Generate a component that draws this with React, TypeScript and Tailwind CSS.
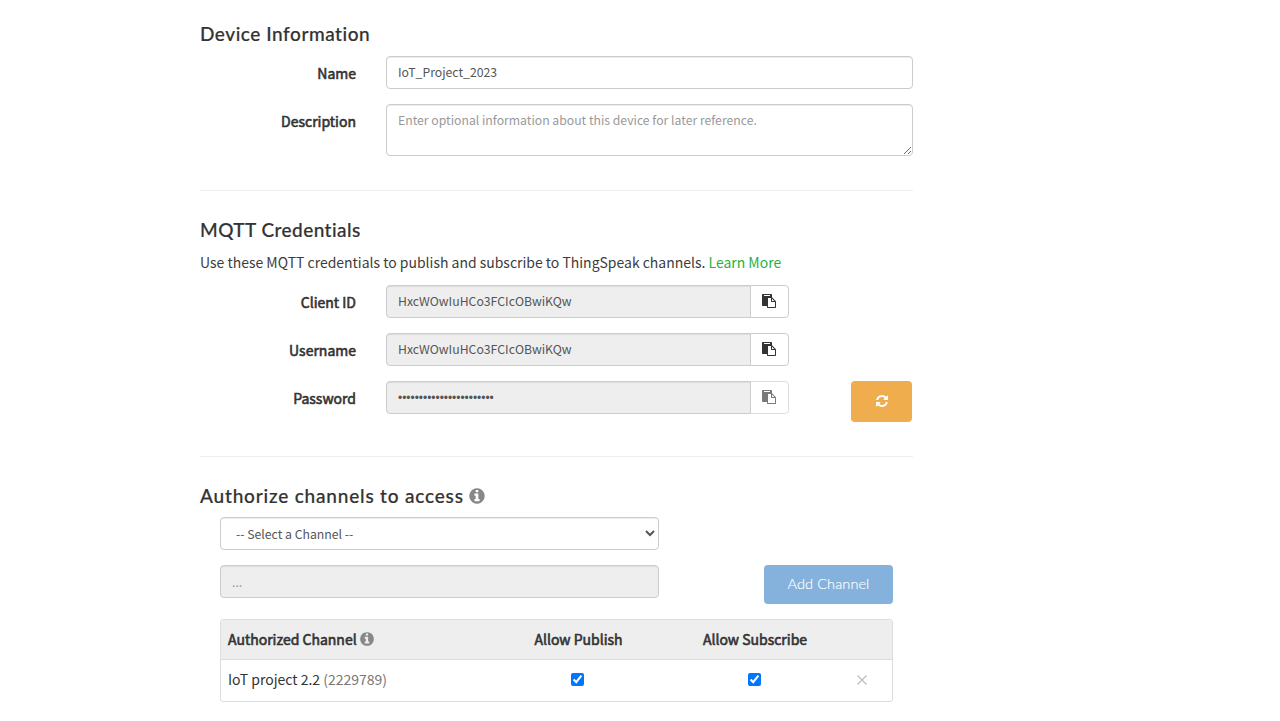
import React from "react";

const PASTE =
  "M768 1664h896v-640h-416q-40 0-68-28t-28-68v-416h-384v1152zm256-1440v-64q0-13-9.5-22.5t-22.5-9.5h-704q-13 0-22.5 9.5t-9.5 22.5v64q0 13 9.5 22.5t22.5 9.5h704q13 0 22.5-9.5t9.5-22.5zm256 672h299l-299-299v299zm512 128v672q0 40-28 68t-68 28h-960q-40 0-68-28t-28-68v-160h-544q-40 0-68-28t-28-68v-1344q0-40 28-68t68-28h1088q40 0 68 28t28 68v328q21 13 36 28l408 408q28 28 48 76t20 88z";
const REFRESH =
  "M1639 1056q0 5-1 7-64 268-268 434.5t-478 166.5q-146 0-282.5-55t-243.5-157l-129 129q-19 19-45 19t-45-19-19-45v-448q0-26 19-45t45-19h448q26 0 45 19t19 45-19 45l-137 137q71 66 161 102t187 36q134 0 250-65t186-179q11-17 53-117 8-23 30-23h192q13 0 22.5 9.5t9.5 22.5zm25-800v448q0 26-19 45t-45 19h-448q-26 0-45-19t-19-45 19-45l138-138q-148-137-349-137-134 0-250 65t-186 179q-11 17-53 117-8 23-30 23h-199q-13 0-22.5-9.5t-9.5-22.5v-7q65-268 270-434.5t480-166.5q146 0 284 55.5t245 156.5l130-129q19-19 45-19t45 19 19 45z";
const INFO =
  "M1152 1376v-160q0-14-9-23t-23-9h-96v-512q0-14-9-23t-23-9h-320q-14 0-23 9t-9 23v160q0 14 9 23t23 9h96v320h-96q-14 0-23 9t-9 23v160q0 14 9 23t23 9h448q14 0 23-9t9-23zm-128-896v-160q0-14-9-23t-23-9h-192q-14 0-23 9t-9 23v160q0 14 9 23t23 9h192q14 0 23-9t9-23zm640 416q0 209-103 385.5t-279.5 279.5-385.5 103-385.5-103-279.5-279.5-103-385.5 103-385.5 279.5-279.5 385.5-103 385.5 103 279.5 279.5 103 385.5z";

function Icon({ d, className }: { d: string; className: string }) {
  return (
    <svg viewBox="0 0 1792 1792" fill="currentColor" className={className}>
      <path d={d} />
    </svg>
  );
}

const heading =
  "flex h-6 items-center font-['Lato',sans-serif] text-[19px] font-medium leading-6 whitespace-nowrap text-[#333] [-webkit-text-stroke:0.2px_#333]";
const label =
  "w-[156px] shrink-0 pt-[5px] text-right text-[14px] leading-6 text-[#333] [-webkit-text-stroke:0.6px_#333]";
const control =
  "block rounded border border-[#ccc] px-[11px] text-[#555] shadow-[inset_0_1px_1px_rgba(0,0,0,0.075)] outline-none placeholder:text-[#999]";

function Credential({ name, value, secret }: { name: string; value: string; secret?: boolean }) {
  return (
    <div className="flex gap-[30px]">
      <label className={label}>{name}</label>
      <div className="flex h-[33px] w-[403px]">
        <input
          readOnly
          type={secret ? "password" : "text"}
          defaultValue={value}
          className={`${control} h-[33px] w-[365px] rounded-r-none bg-[#eee] ${secret ? "font-['Liberation_Sans',sans-serif] text-[11.9px]" : "pb-[2px] text-[12.25px]"}`}
        />
        <button
          className={`-ml-px flex h-[33px] w-[39px] items-center justify-center rounded-r border border-[#ccc] bg-white pr-px pb-px text-[#333] ${secret ? "opacity-65" : ""}`}
        >
          <Icon d={PASTE} className="size-[14px]" />
        </button>
      </div>
    </div>
  );
}

export default function App() {
  return (
    <main className="h-[721px] overflow-hidden bg-white font-['Noto_Sans_CJK_SC',sans-serif] text-[#333]">
      <div className="ml-[200px] w-[713px] pt-[22px]">
        <section>
          <h2 className={`${heading} tracking-[0.55px]`}>Device Information</h2>
          <div className="mt-[10px] flex gap-[30px]">
            <label className={label}>Name</label>
            <input
              defaultValue="IoT_Project_2023"
              className={`${control} h-[33px] w-[527px] pb-[2px] text-[12.25px]`}
            />
          </div>
          <div className="mt-[15px] flex gap-[30px]">
            <label className={label}>Description</label>
            <textarea
              placeholder="Enter optional information about this device for later reference."
              className={`${control} h-[52px] w-[527px] resize pt-[5px] text-[12.23px] leading-5`}
            />
          </div>
        </section>
        <hr className="mt-[34px] border-[#eee]" />
        <section className="mt-[27px]">
          <h2 className={`${heading} tracking-[0.45px]`}>MQTT Credentials</h2>
          <p className="mt-[10px] h-[21px] text-[13.98px] leading-[21px] whitespace-nowrap text-[#3c3c3c]">
            Use these MQTT credentials to publish and subscribe to ThingSpeak channels.{" "}
            <a className="text-[#27b13f]">Learn More</a>
          </p>
          <div className="mt-3 flex items-end justify-between">
            <div className="flex flex-col gap-[15px]">
              <Credential name="Client ID" value="HxcWOwIuHCo3FCIcOBwiKQw" />
              <Credential name="Username" value="HxcWOwIuHCo3FCIcOBwiKQw" />
              <Credential name="Password" value="HxcWOwIuHCo3FCIcOBwiKQw" secret />
            </div>
            <button className="mr-px -mb-[7.5px] flex h-[41px] w-[61px] items-center justify-center rounded bg-[#f0ad4e] pb-px text-white">
              <Icon d={REFRESH} className="size-[14px]" />
            </button>
          </div>
        </section>
        <hr className="mt-[42px] border-[#eee]" />
        <section className="mt-[27px]">
          <h2 className={`${heading} tracking-[0.81px]`}>
            Authorize channels to access
            <Icon d={INFO} className="ml-[4px] size-[18px] text-[#888]" />
          </h2>
          <div className="mt-[9px] ml-5 w-[673px]">
            <select className={`${control} h-[33px] w-[439px] bg-white text-[12.25px]`}>
              <option>-- Select a Channel --</option>
            </select>
            <div className="mt-[15px] flex items-start justify-between">
              <input
                disabled
                placeholder="..."
                className={`${control} h-[33px] w-[439px] bg-[#eee] text-[12.25px]`}
              />
              <button className="h-[39px] w-[129px] rounded bg-[#84b2dc] pb-px font-['Lato',sans-serif] text-[14.5px] font-light tracking-[0.1px] text-white [-webkit-text-stroke:0.15px_#fff]">
                Add Channel
              </button>
            </div>
            <div className="mt-[15px] h-[83px] rounded-[3px] border border-[#ddd] text-[14px]">
              <div className="grid h-10 grid-cols-[269px_177px_176px_1fr] items-center border-b border-[#ddd] bg-[#eee] pb-px [-webkit-text-stroke:0.6px_#333]">
                <div className="flex items-center pl-[7px]">
                  Authorized Channel
                  <Icon d={INFO} className="ml-[2px] size-[16px] text-[#888] [-webkit-text-stroke:0]" />
                </div>
                <div className="text-center">Allow Publish</div>
                <div className="text-center">Allow Subscribe</div>
              </div>
              <div className="grid h-10 grid-cols-[268px_177px_176px_1fr] items-center pb-px">
                <div className="pl-[7px]">
                  IoT project 2.2 <span className="text-[#777]">(2229789)</span>
                </div>
                <input type="checkbox" defaultChecked className="size-[13px] justify-self-center" />
                <input type="checkbox" defaultChecked className="size-[13px] justify-self-center" />
                <svg viewBox="0 0 10 10" className="ml-[15px] size-[10px]" stroke="#bbb" strokeWidth="1.1">
                  <path d="M.5.5l9 9M9.5.5l-9 9" />
                </svg>
              </div>
            </div>
          </div>
        </section>
      </div>
    </main>
  );
}
